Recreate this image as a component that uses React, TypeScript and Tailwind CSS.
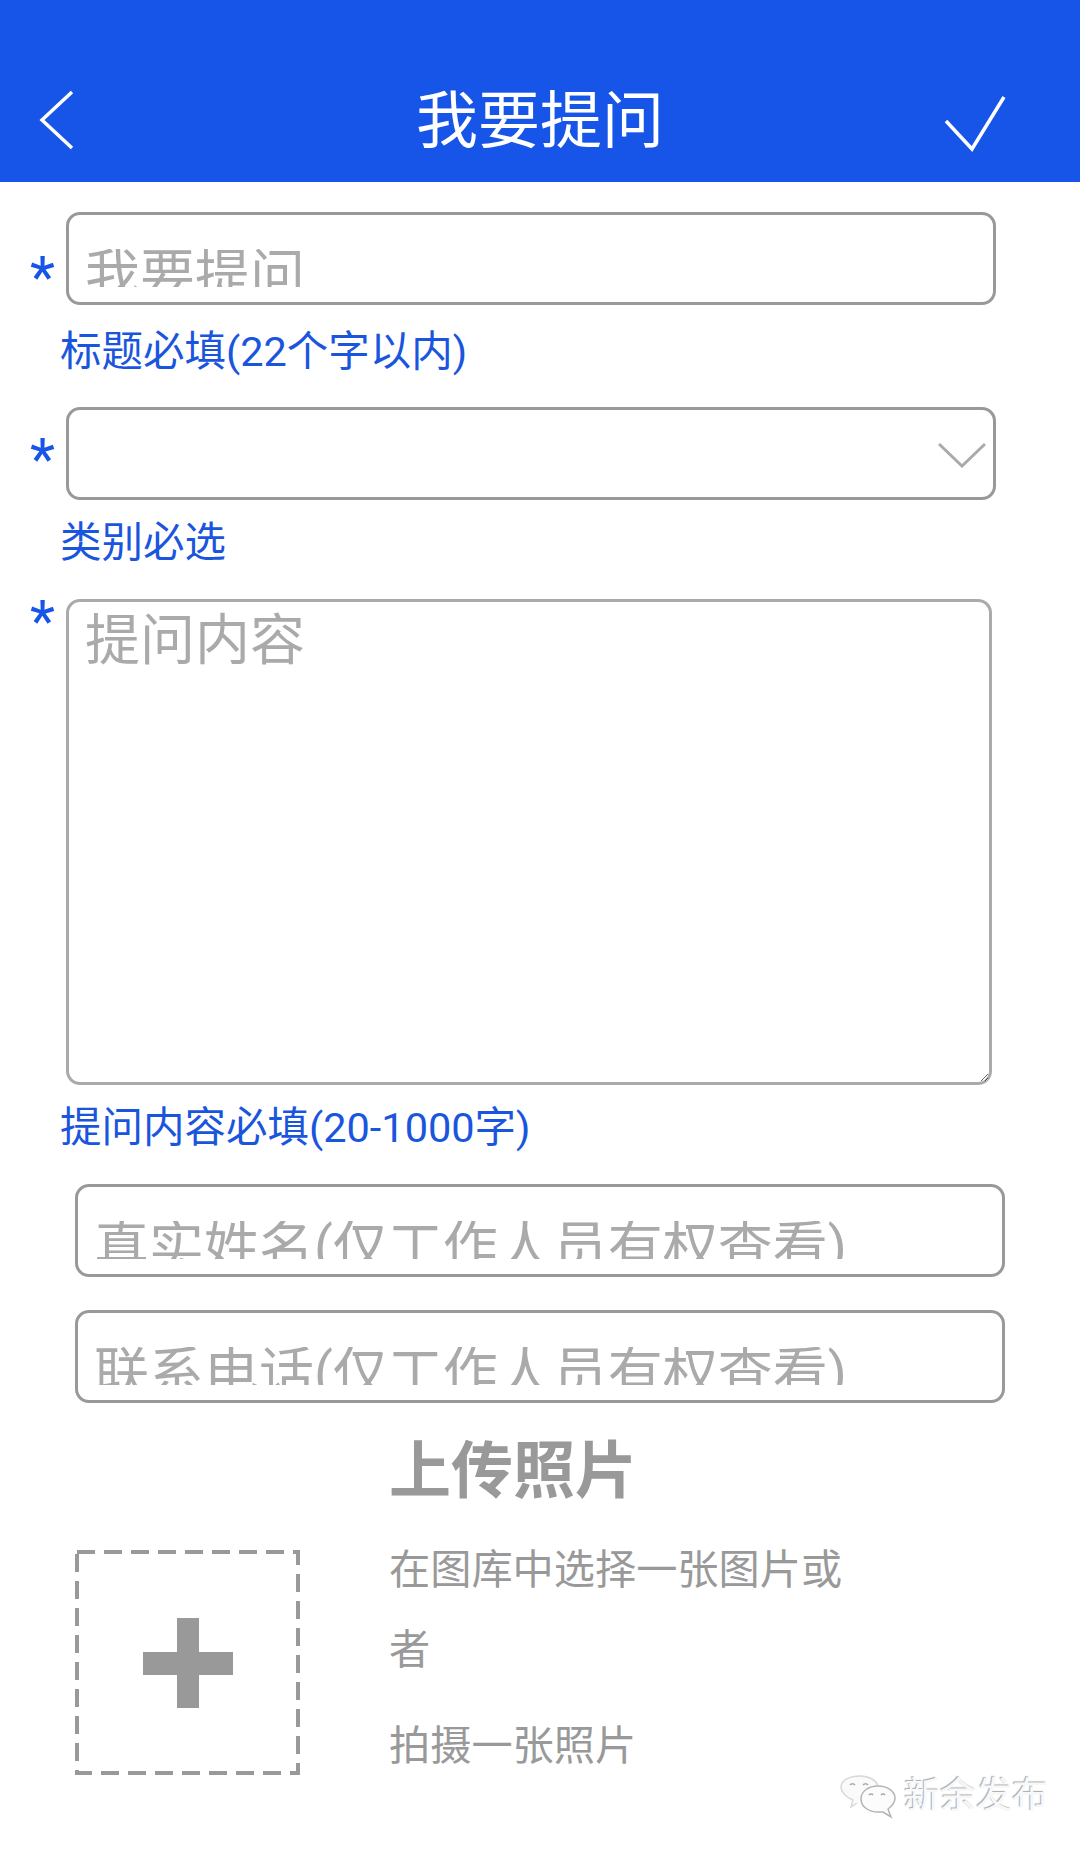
function Star({ className }: { className: string }) {
  return (
    <span className={`block w-[36px] h-[54px] shrink-0 text-[58px] leading-[54px] text-[#1655e8] ${className}`}>*</span>
  );
}

function Hint({ className, children }: { className: string; children: string }) {
  return <p className={`pl-[60px] h-[48px] text-[41.500px] leading-[48px] text-[#1a55dd] ${className}`}>{children}</p>;
}

function Field({ label }: { label: string }) {
  return (
    <div className="box-border w-[930px] h-[93px] rounded-[14px] border-[3px] border-[#999] bg-white pl-[16px] pt-[34px]">
      <div className="h-[38px] overflow-hidden whitespace-nowrap text-[55px] leading-[52px] text-[#aaa]">{label}</div>
    </div>
  );
}

function WeChatMark() {
  return (
    <svg width="56" height="44" viewBox="0 0 56 44" fill="none">
      <path d="M17 28l-6 4 2-7C5 22 1 16 1 12 1 5 10 1 20 1c9 0 16 4 18 10" stroke="#d8d8d8" strokeWidth="1.500" fill="#fafafa" />
      <path d="M43 37l8 5-3-8c4-3 7-7 7-11 0-7-8-12-17-12s-17 5-17 13 8 13 17 13c2 0 3 0 5 0z" stroke="#b4b4b4" strokeWidth="1.500" fill="#fcfcfc" />
      <path d="M10 10a3 3 0 0 1 5 0M23 10a3 3 0 0 1 5 0" stroke="#aaa" strokeWidth="1.500" />
      <path d="M29 20a2.500 2.500 0 0 1 4 0M41 20a2.500 2.500 0 0 1 4 0" stroke="#aaa" strokeWidth="1.500" />
    </svg>
  );
}

export default function App() {
  return (
    <div className="relative w-[1080px] h-[1850px] overflow-hidden bg-white font-['Roboto','Noto_Sans_CJK_SC',sans-serif]">
      {/* Header */}
      <header className="grid grid-cols-[1fr_auto_1fr] items-center h-[182px] pt-[58px] bg-[#1655e8]">
        <svg className="ml-[39px]" width="36" height="60" viewBox="0 0 36 60" fill="none">
          <path d="M33 2L3 30l30 28" stroke="#fff" strokeWidth="3.500" />
        </svg>
        <h1 className="mt-[4px] text-[62px] leading-[62px] font-normal text-white">我要提问</h1>
        <svg className="justify-self-end mr-[74px] mt-[8px]" width="62" height="58" viewBox="0 0 62 58" fill="none">
          <path d="M2 26l26 28L60 2" stroke="#fff" strokeWidth="3.500" />
        </svg>
      </header>

      <main>
        {/* Title */}
        <div className="flex items-start mt-[30px] pl-[30px]">
          <Star className="mt-[38px]" />
          <Field label="我要提问" />
        </div>
        <Hint className="mt-[23px]">标题必填(22个字以内)</Hint>

        {/* Category */}
        <div className="flex items-start mt-[31px] pl-[30px]">
          <Star className="mt-[25px]" />
          <div className="relative">
            <select className="block box-border w-[930px] h-[93px] rounded-[14px] border-[3px] border-[#999] bg-white appearance-none outline-none" />
            <svg className="absolute right-[10px] top-[35px]" width="48" height="26" viewBox="0 0 48 26" fill="none">
              <path d="M1 2l23 22L47 2" stroke="#aaa" strokeWidth="3" />
            </svg>
          </div>
        </div>
        <Hint className="mt-[19px]">类别必选</Hint>

        {/* Question body */}
        <div className="flex items-start mt-[32px] pl-[30px]">
          <Star className="mt-[-5px]" />
          <textarea
            className="block box-border w-[926px] h-[486px] rounded-[14px] border-[3px] border-[#aaa] bg-white pl-[16px] pt-[6px] text-[55px] leading-[64px] outline-none placeholder:text-[#aaa] placeholder:opacity-100"
            placeholder="提问内容"
          />
        </div>
        <Hint className="mt-[19px]">提问内容必填(20-1000字)</Hint>

        {/* Contact */}
        <div className="flex flex-col gap-[33px] mt-[32px] pl-[75px]">
          <Field label="真实姓名(仅工作人员有权查看)" />
          <Field label="联系电话(仅工作人员有权查看)" />
        </div>

        {/* Upload */}
        <section className="flex items-start pl-[75px]">
          <div className="relative flex items-center justify-center w-[225px] h-[225px] mt-[147px] shrink-0">
            <svg className="absolute inset-0" width="225" height="225" viewBox="0 0 225 225" fill="none">
              <rect x="2" y="2" width="221" height="221" stroke="#999" strokeWidth="4" strokeDasharray="18 9" />
            </svg>
            <svg width="90" height="90" viewBox="0 0 90 90">
              <path d="M34 0h22v34h34v23H56v33H34V57H0V34h34z" fill="#999" />
            </svg>
          </div>
          <div className="w-[470px] ml-[89px] mt-[38px] text-[#999]">
            <h2 className="text-[62px] leading-[62px] font-bold">上传照片</h2>
            <p className="mt-[27px] text-[41.200px] leading-[80px]">在图库中选择一张图片或者</p>
            <p className="mt-[16px] text-[41.200px] leading-[80px]">拍摄一张照片</p>
          </div>
        </section>
      </main>

      {/* Watermark */}
      <div className="absolute left-[840px] top-[1775px] flex items-start gap-[8px]">
        <WeChatMark />
        <span className="mt-[3px] text-[36px] leading-[36px] text-[#f8f8f8] [text-shadow:-1px_-1px_1px_#aaa]">新余发布</span>
      </div>
    </div>
  );
}
